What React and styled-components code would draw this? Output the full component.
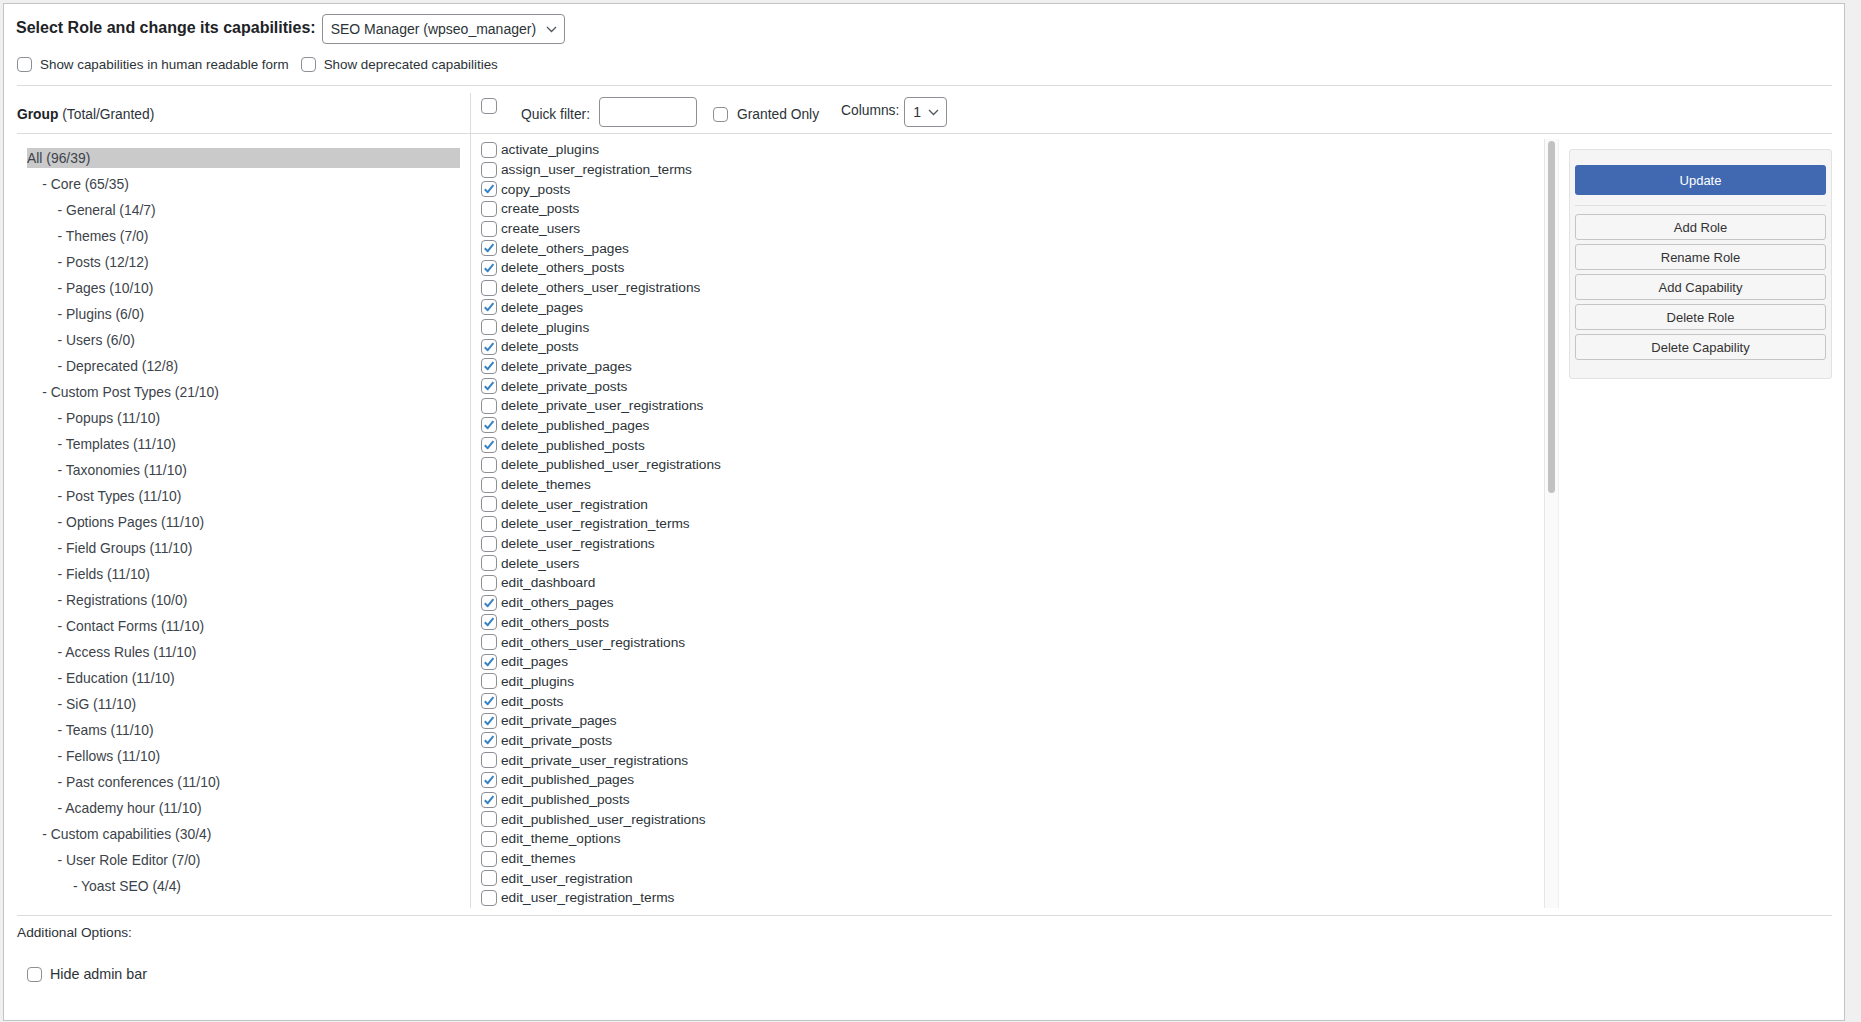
import React from "react";
import styled, { createGlobalStyle } from "styled-components";

const GlobalStyle = createGlobalStyle`
  html, body { margin: 0; padding: 0; }
  body {
    background: #f0f0f1;
    font-family: "Liberation Sans", Arial, sans-serif;
    color: #2c3338;
  }
  * { box-sizing: border-box; }
`;

const Page = styled.div`
  padding: 3px 16px 0 3px;
  height: 1022px;
`;

const Panel = styled.div`
  background: #fff;
  border: 1px solid #c3c4c7;
  height: 1018px;
  padding: 0 12px 0 13px;
  display: flex;
  flex-direction: column;
`;

const TitleRow = styled.div`
  display: flex;
  align-items: center;
  gap: 6px;
  margin-top: 10px;
  height: 30px;
`;

const Title = styled.h2`
  margin: -2px 0 0 -1px;
  font-size: 16px;
  font-weight: 700;
  color: #1d2327;
`;

const SelectBox = styled.div`
  display: flex;
  align-items: center;
  justify-content: space-between;
  width: ${(p) => p.$w}px;
  height: ${(p) => p.$h}px;
  border: 1px solid #8c8f94;
  border-radius: 4px;
  padding: 0 7px 0 ${(p) => p.$pl}px;
  font-size: 14px;
  color: #2c3338;
  background: #fff;
`;

const Chevron = () => (
  <svg width="11" height="7" viewBox="0 0 11 7">
    <polyline points="1,1 5.5,5.5 10,1" fill="none" stroke="#50575e" strokeWidth="1.3" />
  </svg>
);

const OptionsRow = styled.div`
  display: flex;
  align-items: center;
  height: 20px;
  margin-top: 10px;
`;

const OptLabel = styled.label`
  display: flex;
  align-items: center;
  gap: 8px;
  font-size: 13.4px;
  margin-right: 12px;
`;

const Box = styled.span`
  display: inline-flex;
  align-items: center;
  justify-content: center;
  flex: none;
  width: ${(p) => p.$s}px;
  height: ${(p) => p.$s}px;
  border: 1px solid #8c8f94;
  border-radius: 4px;
  background: #fff;
`;

const Checkbox = ({ checked, size = 16 }) => (
  <Box $s={size}>
    {checked && (
      <svg width="12" height="12" viewBox="0 0 12 12">
        <path d="M1.8 6.2 L4.7 9.2 L10.4 2.2" fill="none" stroke="#3582c4" strokeWidth="2" strokeLinejoin="round" />
      </svg>
    )}
  </Box>
);

const Matrix = styled.div`
  margin-top: 11px;
  border-top: 1px solid #dcdcde;
  border-bottom: 1px solid #dcdcde;
  padding: 7px 0;
  display: grid;
  grid-template-columns: 453px 1fr;
  grid-template-rows: 41px 774px;
`;

const HeadCell = styled.div`
  display: flex;
  align-items: center;
  border-bottom: 1px solid #dcdcde;
  ${(p) => (p.$right ? "border-left: 1px solid #dcdcde; padding-left: 10px;" : "")}
  font-size: 13.8px;
`;

const GroupLabel = styled.span`
  margin-top: 2px;
  b { font-weight: 700; color: #1d2327; }
`;

const TopCheck = styled.span`
  align-self: flex-start;
  margin-top: 5px;
  display: flex;
`;

const HeadText = styled.span`
  margin-left: ${(p) => p.$ml || 0}px;
  margin-top: ${(p) => p.$mt || 0}px;
  white-space: nowrap;
`;

const FilterInput = styled.div`
  width: 98px;
  height: 30px;
  border: 1px solid #8c8f94;
  border-radius: 4px;
  margin-left: 9px;
  margin-top: -2px;
`;

const GrantedWrap = styled.span`
  margin-left: 16px;
  margin-top: 2px;
  display: flex;
`;

const ColsSelect = styled(SelectBox)`
  margin-left: 5px;
  margin-top: -2px;
`;

const TreeCell = styled.div`
  padding: 14px 10px 0 10px;
  display: flex;
  flex-direction: column;
  gap: 6px;
`;

const TreeItem = styled.div`
  height: 20px;
  line-height: 20px;
  font-size: 13.9px;
  color: #3c434a;
  padding-left: ${(p) => p.$level * 15.3}px;
  background: ${(p) => (p.$active ? "#cacaca" : "transparent")};
  white-space: nowrap;
`;

const BodyRight = styled.div`
  border-left: 1px solid #dcdcde;
  display: flex;
  min-height: 0;
  overflow: hidden;
`;

const CapsList = styled.div`
  flex: 1;
  padding: 6px 0 0 10px;
  overflow: hidden;
`;

const CapRow = styled.div`
  height: 19.69px;
  display: flex;
  align-items: center;
  gap: 4px;
  font-size: 13.7px;
  color: #2c3338;
  white-space: nowrap;
`;

const ScrollTrack = styled.div`
  width: 15px;
  margin-top: 5px;
  background: #fafafa;
  border-left: 1px solid #e6e6e6;
  border-right: 1px solid #efefef;
  padding: 2px 3px 0 3px;
`;

const ScrollThumb = styled.div`
  height: 352px;
  background: #c1c1c1;
  border-radius: 4px;
`;

const Sidebar = styled.div`
  width: 273px;
  padding: 15px 0 0 10px;
`;

const ActionPanel = styled.div`
  background: #f5f5f5;
  border: 1px solid #e2e2e2;
  border-radius: 3px;
  padding: 15px 5px 18px 5px;
  display: flex;
  flex-direction: column;
  gap: 4px;
`;

const PrimaryButton = styled.div`
  height: 30px;
  background: #4169b2;
  border-radius: 3px;
  color: #fff;
  font-size: 13px;
  display: flex;
  align-items: center;
  justify-content: center;
`;

const Separator = styled.div`
  height: 1px;
  background: #e0e0e0;
  margin: 6px 0 4px 0;
`;

const Button = styled.div`
  height: 26px;
  background: #f6f6f6;
  border: 1px solid #c5c5c5;
  border-radius: 3px;
  color: #333;
  font-size: 13px;
  display: flex;
  align-items: center;
  justify-content: center;
`;

const AddTitle = styled.div`
  margin-top: 8px;
  font-size: 13.7px;
  line-height: 18px;
  color: #2c3338;
`;

const HideRow = styled.label`
  margin-top: 22px;
  padding-left: 10px;
  display: flex;
  align-items: center;
  gap: 8px;
  height: 20px;
  font-size: 14.3px;
  color: #2c3338;
`;

const tree = [
  ["All (96/39)", 0],
  ["- Core (65/35)", 1],
  ["- General (14/7)", 2],
  ["- Themes (7/0)", 2],
  ["- Posts (12/12)", 2],
  ["- Pages (10/10)", 2],
  ["- Plugins (6/0)", 2],
  ["- Users (6/0)", 2],
  ["- Deprecated (12/8)", 2],
  ["- Custom Post Types (21/10)", 1],
  ["- Popups (11/10)", 2],
  ["- Templates (11/10)", 2],
  ["- Taxonomies (11/10)", 2],
  ["- Post Types (11/10)", 2],
  ["- Options Pages (11/10)", 2],
  ["- Field Groups (11/10)", 2],
  ["- Fields (11/10)", 2],
  ["- Registrations (10/0)", 2],
  ["- Contact Forms (11/10)", 2],
  ["- Access Rules (11/10)", 2],
  ["- Education (11/10)", 2],
  ["- SiG (11/10)", 2],
  ["- Teams (11/10)", 2],
  ["- Fellows (11/10)", 2],
  ["- Past conferences (11/10)", 2],
  ["- Academy hour (11/10)", 2],
  ["- Custom capabilities (30/4)", 1],
  ["- User Role Editor (7/0)", 2],
  ["- Yoast SEO (4/4)", 3],
];

const caps = [
  ["activate_plugins", false],
  ["assign_user_registration_terms", false],
  ["copy_posts", true],
  ["create_posts", false],
  ["create_users", false],
  ["delete_others_pages", true],
  ["delete_others_posts", true],
  ["delete_others_user_registrations", false],
  ["delete_pages", true],
  ["delete_plugins", false],
  ["delete_posts", true],
  ["delete_private_pages", true],
  ["delete_private_posts", true],
  ["delete_private_user_registrations", false],
  ["delete_published_pages", true],
  ["delete_published_posts", true],
  ["delete_published_user_registrations", false],
  ["delete_themes", false],
  ["delete_user_registration", false],
  ["delete_user_registration_terms", false],
  ["delete_user_registrations", false],
  ["delete_users", false],
  ["edit_dashboard", false],
  ["edit_others_pages", true],
  ["edit_others_posts", true],
  ["edit_others_user_registrations", false],
  ["edit_pages", true],
  ["edit_plugins", false],
  ["edit_posts", true],
  ["edit_private_pages", true],
  ["edit_private_posts", true],
  ["edit_private_user_registrations", false],
  ["edit_published_pages", true],
  ["edit_published_posts", true],
  ["edit_published_user_registrations", false],
  ["edit_theme_options", false],
  ["edit_themes", false],
  ["edit_user_registration", false],
  ["edit_user_registration_terms", false],
  ["edit_user_registrations", false],
];

const actions = ["Add Role", "Rename Role", "Add Capability", "Delete Role", "Delete Capability"];

export default function App() {
  return (
    <>
      <GlobalStyle />
      <Page>
        <Panel>
          <TitleRow>
            <Title>Select Role and change its capabilities:</Title>
            <SelectBox $w={243} $h={30} $pl={8}>
              <span>SEO Manager (wpseo_manager)</span>
              <Chevron />
            </SelectBox>
          </TitleRow>
          <OptionsRow>
            <OptLabel>
              <Checkbox size={15} />
              Show capabilities in human readable form
            </OptLabel>
            <OptLabel>
              <Checkbox size={15} />
              Show deprecated capabilities
            </OptLabel>
          </OptionsRow>

          <Matrix>
            <HeadCell>
              <GroupLabel>
                <b>Group</b> (Total/Granted)
              </GroupLabel>
            </HeadCell>
            <HeadCell $right>
              <TopCheck>
                <Checkbox size={16} />
              </TopCheck>
              <HeadText $ml={24} $mt={3}>Quick filter:</HeadText>
              <FilterInput />
              <GrantedWrap>
                <Checkbox size={15} />
              </GrantedWrap>
              <HeadText $ml={9} $mt={3}>Granted Only</HeadText>
              <HeadText $ml={22} $mt={-5}>Columns:</HeadText>
              <ColsSelect $w={43} $h={30} $pl={8}>
                <span>1</span>
                <Chevron />
              </ColsSelect>
            </HeadCell>

            <TreeCell>
              {tree.map(([label, level], i) => (
                <TreeItem key={label} $level={level} $active={i === 0}>
                  {label}
                </TreeItem>
              ))}
            </TreeCell>
            <BodyRight>
              <CapsList>
                {caps.map(([name, checked]) => (
                  <CapRow key={name}>
                    <Checkbox checked={checked} size={16} />
                    <span>{name}</span>
                  </CapRow>
                ))}
              </CapsList>
              <ScrollTrack>
                <ScrollThumb />
              </ScrollTrack>
              <Sidebar>
                <ActionPanel>
                  <PrimaryButton>Update</PrimaryButton>
                  <Separator />
                  {actions.map((a) => (
                    <Button key={a}>{a}</Button>
                  ))}
                </ActionPanel>
              </Sidebar>
            </BodyRight>
          </Matrix>

          <AddTitle>Additional Options:</AddTitle>
          <HideRow>
            <Checkbox size={15} />
            Hide admin bar
          </HideRow>
        </Panel>
      </Page>
    </>
  );
}
